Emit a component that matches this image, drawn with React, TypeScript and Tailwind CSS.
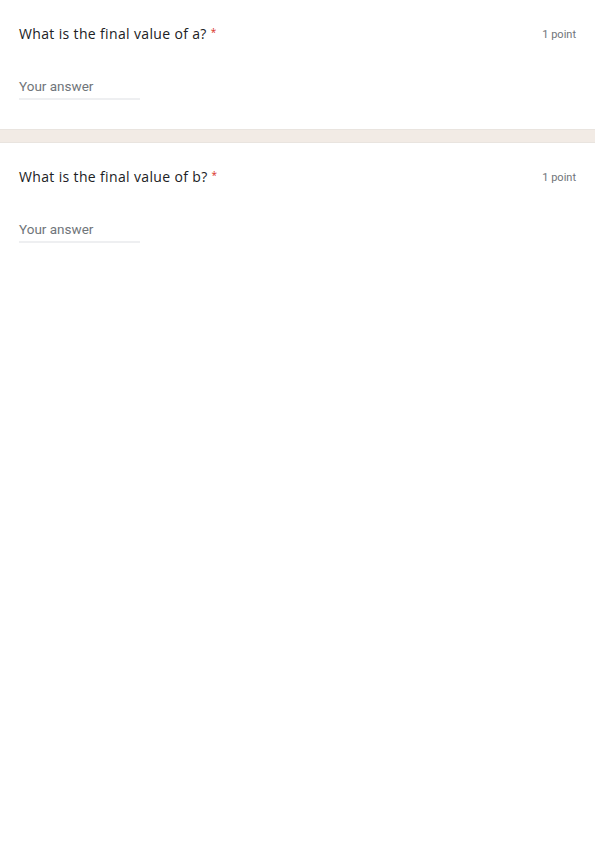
const questions = ["What is the final value of a?", "What is the final value of b?"]

function QuestionCard({ title }: { title: string }) {
  return (
    <div className="bg-white px-[19px] pt-[24px] pb-[29px]">
      <div className="flex items-start justify-between">
        <div className="text-[14px] leading-[20px] tracking-[0.35px] text-[#202124]" style={{ fontFamily: "'Open Sans', Roboto, sans-serif" }}>
          {title}
          <span className="relative top-[-3px] ml-[4px] text-[10px] text-[#d93025]">*</span>
        </div>
        <div className="pt-[3px] text-[11px] leading-[16px] text-[#70757a]">1 point</div>
      </div>
      <div className="mt-[31px] w-[121px] border-b-2 border-[#eeeff1] pb-[2px] text-[13.5px] leading-[20px] text-[#70757a]">
        Your answer
      </div>
    </div>
  )
}

export default function App() {
  return (
    <div className="min-h-[842px] w-[595px] bg-white" style={{ fontFamily: "Roboto, 'Noto Sans', sans-serif" }}>
      <QuestionCard title={questions[0]} />
      <div className="h-[14px] border-y border-[#e9e4df] bg-[#f2ebe5]" />
      <QuestionCard title={questions[1]} />
    </div>
  )
}
